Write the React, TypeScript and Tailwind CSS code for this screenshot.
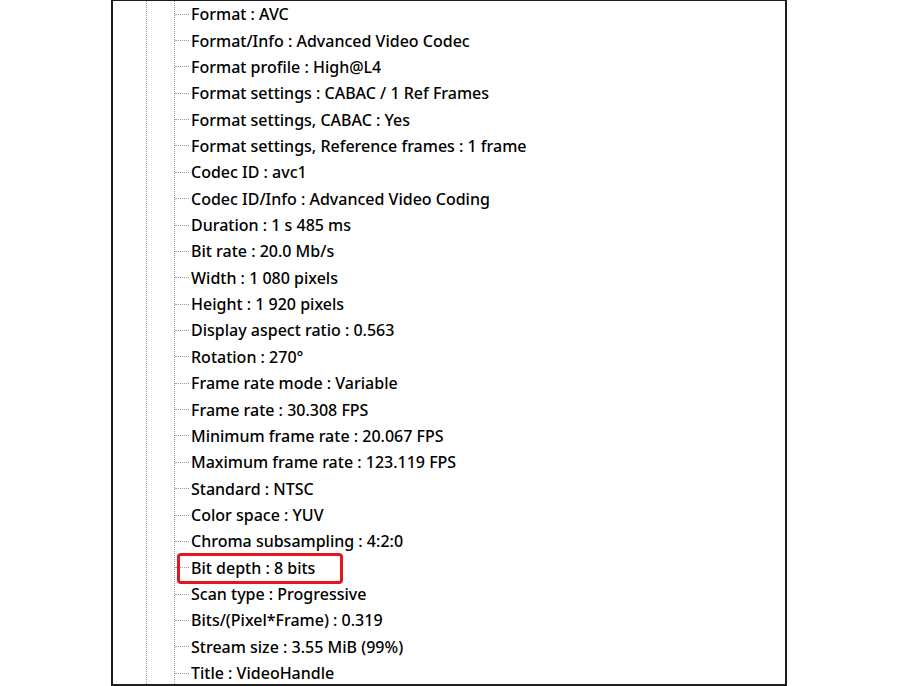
const ROWS = [
  'Format : AVC',
  'Format/Info : Advanced Video Codec',
  'Format profile : High@L4',
  'Format settings : CABAC / 1 Ref Frames',
  'Format settings, CABAC : Yes',
  'Format settings, Reference frames : 1 frame',
  'Codec ID : avc1',
  'Codec ID/Info : Advanced Video Coding',
  'Duration : 1 s 485 ms',
  'Bit rate : 20.0 Mb/s',
  'Width : 1 080 pixels',
  'Height : 1 920 pixels',
  'Display aspect ratio : 0.563',
  'Rotation : 270°',
  'Frame rate mode : Variable',
  'Frame rate : 30.308 FPS',
  'Minimum frame rate : 20.067 FPS',
  'Maximum frame rate : 123.119 FPS',
  'Standard : NTSC',
  'Color space : YUV',
  'Chroma subsampling : 4:2:0',
  'Bit depth : 8 bits',
  'Scan type : Progressive',
  'Bits/(Pixel*Frame) : 0.319',
  'Stream size : 3.55 MiB (99%)',
  'Title : VideoHandle',
]

export default function App() {
  return (
    <div className="w-[900px] h-[686px] bg-white flex overflow-hidden">
      <div className="ml-[111px] w-[676px] h-[686px] border-2 border-[#1e1e1e] border-t-[1px] relative overflow-hidden">
        {/* tree guide lines */}
        <div className="absolute left-[33px] top-0 bottom-0 border-l border-dotted border-[#9a9a9a]" />
        <div className="absolute left-[61px] top-0 bottom-0 border-l border-dotted border-[#9a9a9a]" />
        <ul
          className="text-[16px] text-black font-medium"
          style={{ fontFamily: '"Noto Sans", "Open Sans", sans-serif' }}
        >
          {ROWS.map((r) => {
            const hl = r.startsWith('Bit depth')
            return (
              <li key={r} className="h-[26.36px] flex items-center relative">
                <span className="ml-[62px] w-[14px] border-t border-dotted border-[#9a9a9a]" />
                <span className="ml-[2px] whitespace-nowrap leading-none">{r}</span>
                {hl && (
                  <span className="absolute left-[64px] top-[-2px] w-[166px] h-[31px] border-[3px] border-[#e8141b] rounded-[4px]" />
                )}
              </li>
            )
          })}
        </ul>
      </div>
    </div>
  )
}
